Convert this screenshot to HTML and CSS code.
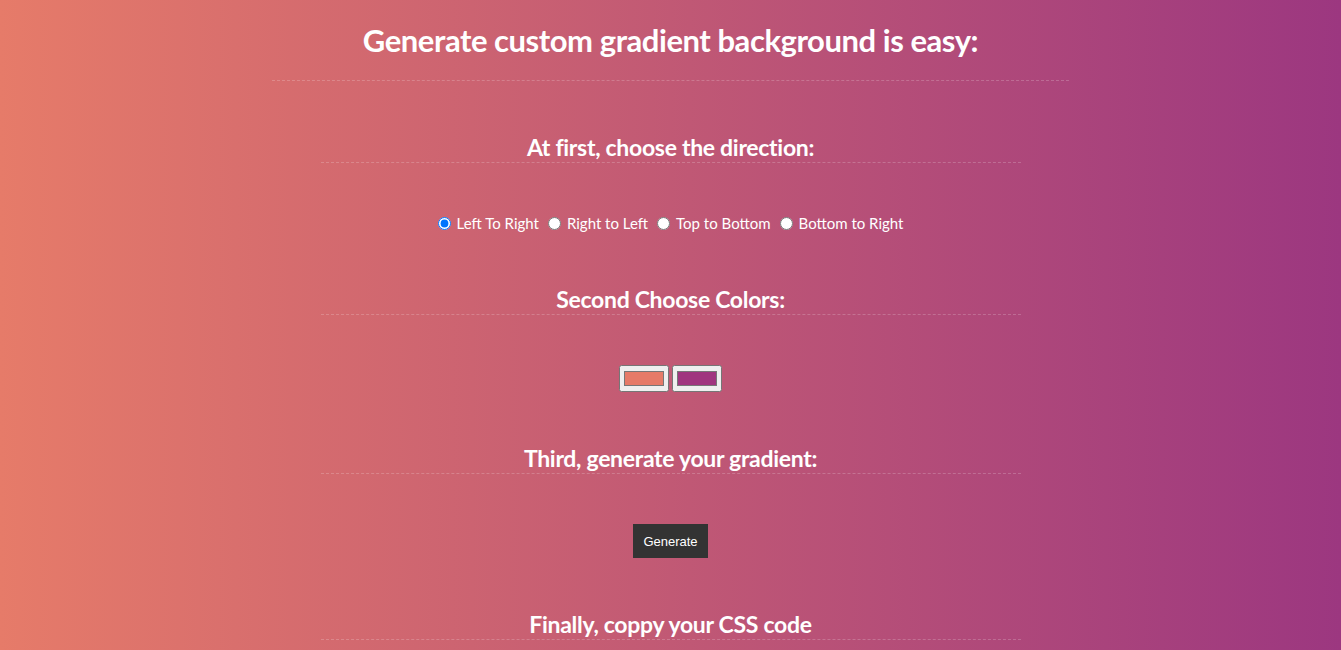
FILE: index.html
```html
<!DOCTYPE html>
<html lang="en">
<head>
<meta charset="utf-8">
<title>Gradient Generator</title>
<link rel="stylesheet" href="styles.css">
</head>
<body>
<main class="page">
  <h1 class="title">Generate custom gradient background is easy:</h1>

  <section class="step">
    <h2 class="step-title">At first, choose the direction:</h2>
    <div class="step-body radios">
      <label class="radio"><input type="radio" name="dir" checked> Left To Right</label>
      <label class="radio"><input type="radio" name="dir"> Right to Left</label>
      <label class="radio"><input type="radio" name="dir"> Top to Bottom</label>
      <label class="radio"><input type="radio" name="dir"> Bottom to Right</label>
    </div>
  </section>

  <section class="step">
    <h2 class="step-title">Second Choose Colors:</h2>
    <div class="step-body colors">
      <input class="color" type="color" value="#e67a68">
      <input class="color" type="color" value="#a0357f">
    </div>
  </section>

  <section class="step">
    <h2 class="step-title">Third, generate your gradient:</h2>
    <div class="step-body">
      <button class="btn" type="button">Generate</button>
    </div>
  </section>

  <section class="step">
    <h2 class="step-title">Finally, coppy your CSS code</h2>
  </section>
</main>
</body>
</html>
```

FILE: styles.css
```css
html, body {
  margin: 0;
  height: 100%;
}
body {
  background: linear-gradient(to right, #e67b69, #9c3780);
  color: #fff;
  font-family: "Lato", "Noto Sans", sans-serif;
  overflow: hidden;
}
.page {
  display: flex;
  flex-direction: column;
  align-items: center;
}
.title {
  width: 797px;
  margin: 0 0 51px;
  padding: 20px 0;
  font-size: 31px;
  line-height: 40px;
  font-weight: 700;
  letter-spacing: -0.45px;
  text-align: center;
  border-bottom: 1px dashed rgba(255, 255, 255, 0.2);
}
.step {
  width: 700px;
}
.step-title {
  margin: 0;
  font-size: 23px;
  line-height: 30px;
  font-weight: 700;
  letter-spacing: -0.3px;
  text-align: center;
  border-bottom: 1px dashed rgba(255, 255, 255, 0.2);
}
.step-body {
  display: flex;
  justify-content: center;
  align-items: center;
  padding: 50px 0 51px;
}
.radios {
  font-size: 15px;
  line-height: 20px;
}
.radio {
  display: inline-flex;
  align-items: center;
}
.radio input {
  margin: 0 6px 0 9px;
  width: 13px;
  height: 13px;
}
.radio:first-child input {
  margin-left: 0;
}
.colors {
  gap: 3px;
}
.color {
  width: 50px;
  height: 27px;
  margin: 0;
}
.btn {
  background: #333;
  color: #fff;
  border: none;
  font-family: "Liberation Sans", Arial, sans-serif;
  font-size: 13px;
  height: 34px;
  padding: 0 10px;
  cursor: pointer;
}
```
